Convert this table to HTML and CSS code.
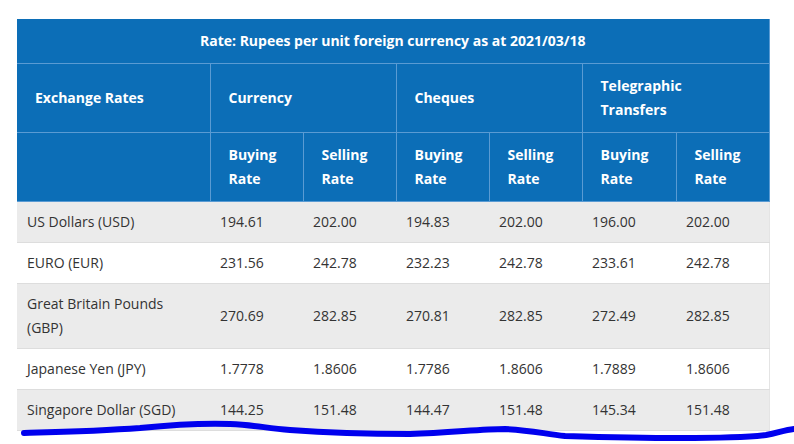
FILE: index.html
```html
<!DOCTYPE html>
<html>
<head>
<meta charset="utf-8">
<link rel="stylesheet" href="styles.css">
</head>
<body>
<div class="page">
<table class="rates">
  <colgroup>
    <col class="c-name"><col class="c-num"><col class="c-num"><col class="c-num"><col class="c-num"><col class="c-num6"><col class="c-num">
  </colgroup>
  <thead>
    <tr><th colspan="7" class="title">Rate: Rupees per unit foreign currency as at 2021/03/18</th></tr>
    <tr>
      <th>Exchange Rates</th>
      <th colspan="2">Currency</th>
      <th colspan="2">Cheques</th>
      <th colspan="2">Telegraphic<br>Transfers</th>
    </tr>
    <tr>
      <th></th>
      <th>Buying<br>Rate</th><th>Selling<br>Rate</th>
      <th>Buying<br>Rate</th><th>Selling<br>Rate</th>
      <th>Buying<br>Rate</th><th>Selling<br>Rate</th>
    </tr>
  </thead>
  <tbody>
    <tr class="alt"><td>US Dollars (USD)</td><td>194.61</td><td>202.00</td><td>194.83</td><td>202.00</td><td>196.00</td><td>202.00</td></tr>
    <tr><td>EURO (EUR)</td><td>231.56</td><td>242.78</td><td>232.23</td><td>242.78</td><td>233.61</td><td>242.78</td></tr>
    <tr class="alt"><td>Great Britain Pounds (GBP)</td><td>270.69</td><td>282.85</td><td>270.81</td><td>282.85</td><td>272.49</td><td>282.85</td></tr>
    <tr><td>Japanese Yen (JPY)</td><td>1.7778</td><td>1.8606</td><td>1.7786</td><td>1.8606</td><td>1.7889</td><td>1.8606</td></tr>
    <tr class="alt"><td>Singapore Dollar (SGD)</td><td>144.25</td><td>151.48</td><td>144.47</td><td>151.48</td><td>145.34</td><td>151.48</td></tr>
  </tbody>
</table>
<svg class="scribble" width="794" height="444" viewBox="0 0 794 444">
  <path d="M24 433 C60 432 100 431 140 428 C170 425 200 423 230 424 C255 425 265 428 290 430 C330 433 370 434 410 434 C450 433 480 429 505 429 C530 430 545 434 565 436 C600 437 640 438 680 438 C720 438 750 437 766 435 C778 433 784 430 794 429" fill="none" stroke="#0000ee" stroke-width="6" stroke-linecap="round" stroke-linejoin="round"/>
</svg>
</div>
</body>
</html>
```

FILE: styles.css
```css
html, body {
  margin: 0;
  padding: 0;
  background: #ffffff;
}
.page {
  position: relative;
  width: 794px;
  height: 444px;
  overflow: hidden;
  padding: 19px 0 0 17px;
  box-sizing: border-box;
}
.rates {
  border-collapse: collapse;
  table-layout: fixed;
  width: 752px;
  font-family: "Open Sans", "Liberation Sans", sans-serif;
  font-size: 14px;
  line-height: 24px;
}
.c-name { width: 193px; }
.c-num { width: 93px; }
.c-num6 { width: 94px; }
.rates th {
  background: #0c6eb7;
  color: #ffffff;
  font-weight: 700;
  text-align: left;
  vertical-align: middle;
  padding: 10px 18px;
  border: 1px solid #5a9bd3;
  border-top: none;
}
.rates th:first-child { border-left: none; }
.rates th.title {
  text-align: center;
  border-top: none;
}
.rates td {
  color: #333333;
  padding: 8px 10px;
  vertical-align: middle;
  border-bottom: 1px solid #dddddd;
  background: #ffffff;
}
.rates td:last-child { border-right: 1px solid #e4e4e4; }
.rates tr.alt td { background: #ebebeb; }
.scribble {
  position: absolute;
  left: 0;
  top: 0;
  pointer-events: none;
}
```
